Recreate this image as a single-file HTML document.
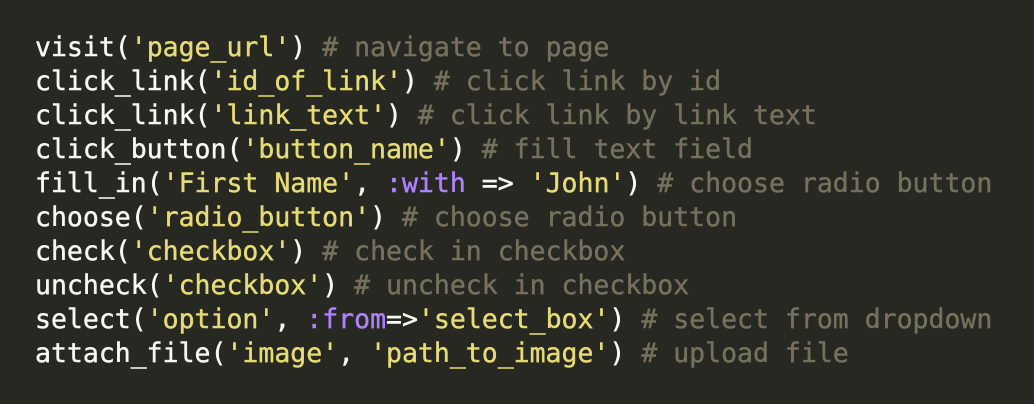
<!DOCTYPE html>
<html><head><style>
html,body{margin:0;padding:0;background:#272822;width:1034px;height:404px;overflow:hidden}
pre{margin:0;position:absolute;left:35px;top:31px;font-family:"DejaVu Sans Mono","Liberation Mono",monospace;font-size:26.5px;line-height:34px;color:#f8f8f2;font-weight:normal;letter-spacing:0;-webkit-text-stroke:0.4px currentColor}
.s{color:#e6db74}.c{color:#75715e}.y{color:#ae81ff}
</style></head><body>
<pre>visit(<span class="s">'page_url'</span>) <span class="c"># navigate to page</span>
click_link(<span class="s">'id_of_link'</span>) <span class="c"># click link by id</span>
click_link(<span class="s">'link_text'</span>) <span class="c"># click link by link text</span>
click_button(<span class="s">'button_name'</span>) <span class="c"># fill text field</span>
fill_in(<span class="s">'First Name'</span>, <span class="y">:with</span> =&gt; <span class="s">'John'</span>) <span class="c"># choose radio button</span>
choose(<span class="s">'radio_button'</span>) <span class="c"># choose radio button</span>
check(<span class="s">'checkbox'</span>) <span class="c"># check in checkbox</span>
uncheck(<span class="s">'checkbox'</span>) <span class="c"># uncheck in checkbox</span>
select(<span class="s">'option'</span>, <span class="y">:from</span>=&gt;<span class="s">'select_box'</span>) <span class="c"># select from dropdown</span>
attach_file(<span class="s">'image'</span>, <span class="s">'path_to_image'</span>) <span class="c"># upload file</span></pre>
</body></html>
